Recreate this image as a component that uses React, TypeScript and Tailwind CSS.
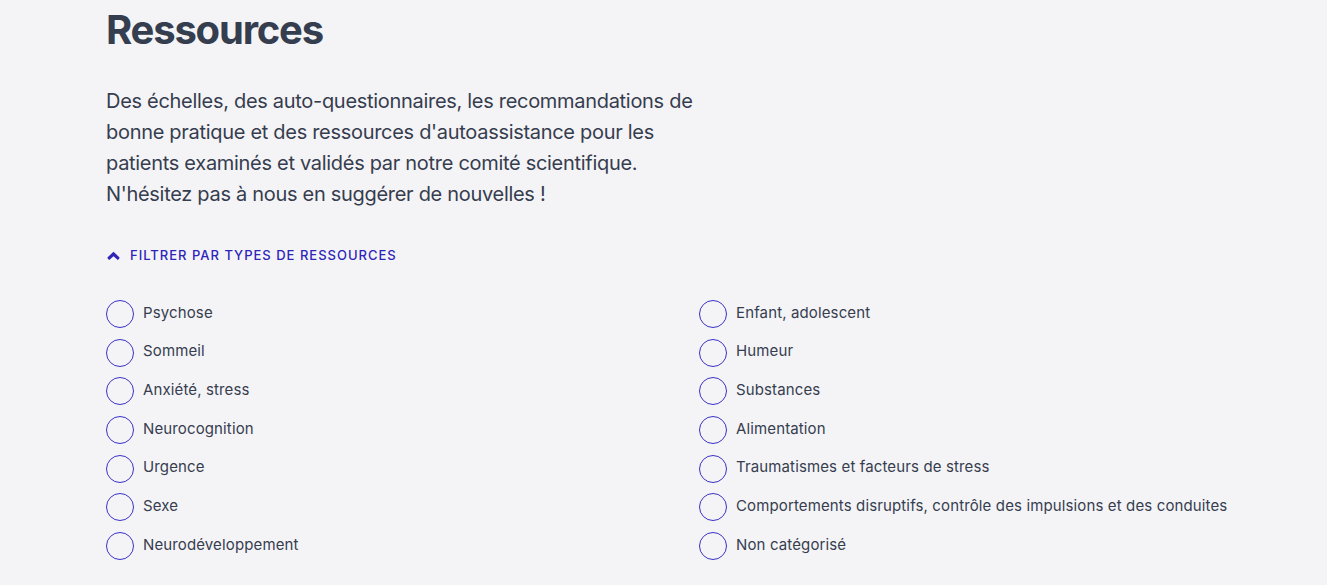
import React from "react";

const left = ["Psychose", "Sommeil", "Anxiété, stress", "Neurocognition", "Urgence", "Sexe", "Neurodéveloppement"];
const right = [
  "Enfant, adolescent",
  "Humeur",
  "Substances",
  "Alimentation",
  "Traumatismes et facteurs de stress",
  "Comportements disruptifs, contrôle des impulsions et des conduites",
  "Non catégorisé",
];

function Item({ label }: { label: string }) {
  return (
    <div className="flex items-center h-[38.7px]">
      <span className="w-[28px] h-[28px] rounded-full border-[1.5px] border-[#3a32c4] shrink-0" />
      <span className="ml-[9px] text-[15px] tracking-[0.13px] text-[#363d4e] -mt-[2px]">{label}</span>
    </div>
  );
}

export default function App() {
  return (
    <div
      className="w-[1327px] h-[585px] bg-[#f4f4f7] overflow-hidden pl-[106px]"
      style={{ fontFamily: "Inter, 'Noto Sans', sans-serif" }}
    >
      <h1 className="text-[40px] font-bold text-[#353e4f] leading-[48px] mt-[6px] tracking-[-1.2px]">Ressources</h1>
      <p className="mt-[32px] text-[20px] leading-[31px] text-[#363d4e] tracking-[-0.3px]">
        Des échelles, des auto-questionnaires, les recommandations de
        <br />
        bonne pratique et des ressources d'autoassistance pour les
        <br />
        patients examinés et validés par notre comité scientifique.
        <br />
        N'hésitez pas à nous en suggérer de nouvelles !
      </p>
      <div className="mt-[36px] flex items-center gap-[10px] text-[#2e24b8]">
        <svg width="13" height="10" viewBox="0 0 13 10" className="ml-[1px]">
          <path
            d="M6.5 0.8 L12.3 6.2 Q12.8 6.8 12.2 7.6 L11.4 8.6 Q10.8 9.2 10.2 8.6 L6.5 5.3 L2.8 8.6 Q2.2 9.2 1.6 8.6 L0.8 7.6 Q0.2 6.8 0.7 6.2 Z"
            fill="currentColor"
          />
        </svg>
        <span className="text-[13px] font-medium tracking-[1px] uppercase">Filtrer par types de ressources</span>
      </div>
      <div className="mt-[29px] grid grid-cols-[593px_1fr]">
        <div className="flex flex-col">
          {left.map((l) => (
            <Item key={l} label={l} />
          ))}
        </div>
        <div className="flex flex-col">
          {right.map((l) => (
            <Item key={l} label={l} />
          ))}
        </div>
      </div>
    </div>
  );
}
